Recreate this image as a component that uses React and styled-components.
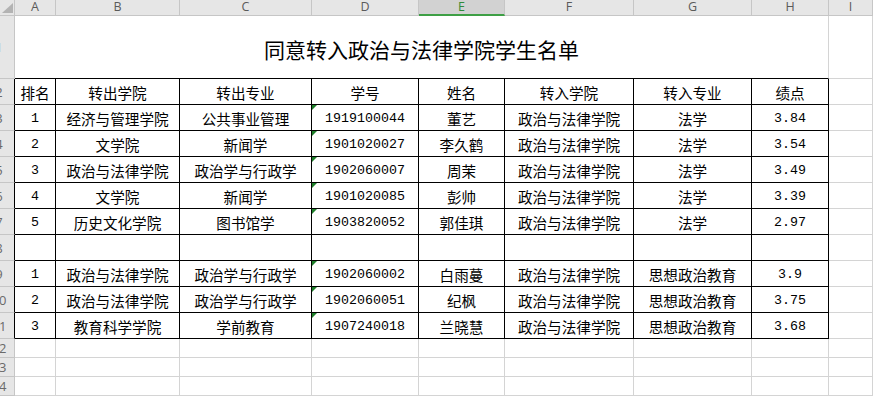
import React from "react";
import styled, { createGlobalStyle, css } from "styled-components";

const GlobalStyle = createGlobalStyle`
  html, body { margin: 0; padding: 0; background: #ffffff; overflow: hidden; }
  * { box-sizing: border-box; }
`;

const COLS = "15px 41px 124px 132px 107px 86px 129px 118px 77px 1fr";
const GRID = "#d4d4d4";
const HEAD_LINE = "#c6c6c6";

const Sheet = styled.div`
  width: 873px;
  height: 396px;
  overflow: hidden;
  background: #fff;
  font-family: "Noto Sans CJK SC", sans-serif;
`;

const Row = styled.div`
  display: grid;
  grid-template-columns: ${COLS};
  height: ${(p) => p.$h}px;
`;

const Corner = styled.div`
  background: #e6e6e6;
  border-right: 1px solid ${HEAD_LINE};
  border-bottom: 1px solid ${HEAD_LINE};
  display: flex;
  align-items: flex-end;
  justify-content: flex-end;
  padding: 0 1px 2px 0;
`;

const ColHeader = styled.div`
  background: ${(p) => (p.$active ? "#d2d2d2" : "#e6e6e6")};
  border-right: 1px solid ${HEAD_LINE};
  border-bottom: ${(p) => (p.$active ? "2px solid #3e9f45" : `1px solid ${HEAD_LINE}`)};
  color: ${(p) => (p.$active ? "#2f8b3a" : "#5a5a5a")};
  font-family: "Open Sans", "Liberation Sans", sans-serif;
  font-size: 12.5px;
  line-height: 14px;
  display: flex;
  justify-content: center;
  align-items: flex-start;
`;

const RowHead = styled.div`
  background: #e6e6e6;
  border-right: 1px solid ${(p) => (p.$dark ? "#000" : HEAD_LINE)};
  border-bottom: 1px solid ${HEAD_LINE};
  overflow: hidden;
  display: flex;
  align-items: center;
`;

const RowNum = styled.span`
  flex: 0 0 30px;
  margin-left: -16px;
  text-align: center;
  color: #6a6a6a;
  font-family: "Open Sans", "Liberation Sans", sans-serif;
  font-size: 13px;
`;

const Title = styled.div`
  grid-column: span 8;
  border-right: 1px solid ${GRID};
  border-bottom: 1px solid #000;
  display: flex;
  align-items: center;
  justify-content: center;
  font-size: 21px;
  color: #000;
  padding-top: 3px;
`;

const Cell = styled.div`
  position: relative;
  border-right: 1px solid ${(p) => (p.$table ? "#000" : GRID)};
  border-bottom: 1px solid ${(p) => (p.$table ? "#000" : GRID)};
  display: flex;
  align-items: center;
  justify-content: center;
  padding-top: 2px;
  white-space: nowrap;
  color: #000;
  font-size: 14.6px;
  ${(p) =>
    p.$num &&
    css`
      font-family: "Liberation Mono", "Noto Sans CJK SC", monospace;
      font-size: 13.3px;
    `}
  ${(p) =>
    p.$flag &&
    css`
      &::before {
        content: "";
        position: absolute;
        top: 0;
        left: 0;
        border-top: 5px solid #1e7f2a;
        border-right: 5px solid transparent;
      }
    `}
`;

const letters = ["A", "B", "C", "D", "E", "F", "G", "H", "I"];

const header = ["排名", "转出学院", "转出专业", "学号", "姓名", "转入学院", "转入专业", "绩点"];

const group1 = [
  ["1", "经济与管理学院", "公共事业管理", "1919100044", "董艺", "政治与法律学院", "法学", "3.84"],
  ["2", "文学院", "新闻学", "1901020027", "李久鹤", "政治与法律学院", "法学", "3.54"],
  ["3", "政治与法律学院", "政治学与行政学", "1902060007", "周茉", "政治与法律学院", "法学", "3.49"],
  ["4", "文学院", "新闻学", "1901020085", "彭帅", "政治与法律学院", "法学", "3.39"],
  ["5", "历史文化学院", "图书馆学", "1903820052", "郭佳琪", "政治与法律学院", "法学", "2.97"],
];

const group2 = [
  ["1", "政治与法律学院", "政治学与行政学", "1902060002", "白雨蔓", "政治与法律学院", "思想政治教育", "3.9"],
  ["2", "政治与法律学院", "政治学与行政学", "1902060051", "纪枫", "政治与法律学院", "思想政治教育", "3.75"],
  ["3", "教育科学学院", "学前教育", "1907240018", "兰晓慧", "政治与法律学院", "思想政治教育", "3.68"],
];

const numCols = new Set([0, 3, 7]);

function DataRow({ n, values }) {
  return (
    <Row $h={26}>
      <RowHead $dark>
        <RowNum>{n}</RowNum>
      </RowHead>
      {values.map((v, i) => (
        <Cell key={i} $table $num={numCols.has(i)} $flag={i === 3}>
          {v}
        </Cell>
      ))}
      <Cell />
    </Row>
  );
}

function EmptyRow({ n, table, h }) {
  return (
    <Row $h={h}>
      <RowHead $dark={table}>
        <RowNum>{n}</RowNum>
      </RowHead>
      {Array.from({ length: 8 }).map((_, i) => (
        <Cell key={i} $table={table} />
      ))}
      <Cell />
    </Row>
  );
}

export default function App() {
  return (
    <>
      <GlobalStyle />
      <Sheet>
        <Row $h={16}>
          <Corner>
            <svg width="11" height="10" viewBox="0 0 11 10">
              <polygon points="0,10 11,10 11,0" fill="#b3b3b3" />
            </svg>
          </Corner>
          {letters.map((l) => (
            <ColHeader key={l} $active={l === "E"}>
              {l}
            </ColHeader>
          ))}
        </Row>
        <Row $h={63}>
          <RowHead>
            <RowNum>1</RowNum>
          </RowHead>
          <Title>同意转入政治与法律学院学生名单</Title>
          <Cell />
        </Row>
        <Row $h={26}>
          <RowHead $dark>
            <RowNum>2</RowNum>
          </RowHead>
          {header.map((h) => (
            <Cell key={h} $table>
              {h}
            </Cell>
          ))}
          <Cell />
        </Row>
        {group1.map((r, i) => (
          <DataRow key={"a" + i} n={i + 3} values={r} />
        ))}
        <EmptyRow n={8} table h={26} />
        {group2.map((r, i) => (
          <DataRow key={"b" + i} n={i + 9} values={r} />
        ))}
        <EmptyRow n={12} h={19} />
        <EmptyRow n={13} h={19} />
        <EmptyRow n={14} h={19} />
      </Sheet>
    </>
  );
}
